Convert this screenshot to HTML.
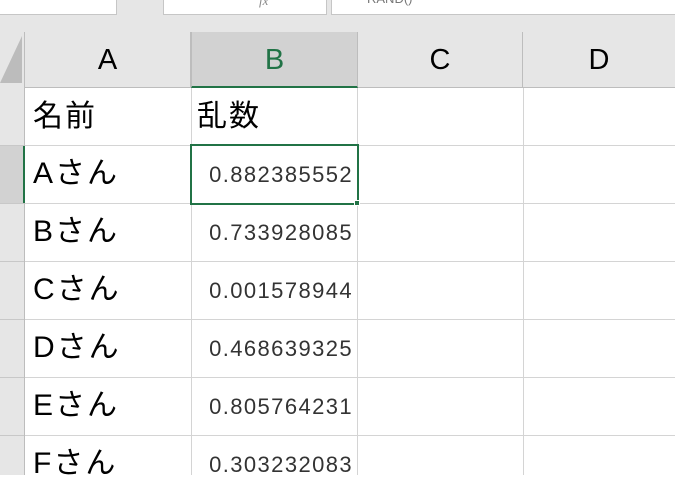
<!DOCTYPE html>
<html><head><meta charset="utf-8"><style>
*{margin:0;padding:0;box-sizing:border-box}
body{width:675px;height:475px;overflow:hidden;background:#fff;position:relative;font-family:"Liberation Sans","Noto Sans CJK JP",sans-serif}
.a{position:absolute}
.box{position:absolute;top:-2px;height:17px;background:#fff;border:1px solid #c6c6c6}
.hl{position:absolute;left:25px;width:650px;height:1px;background:#d4d4d4}
.vl{position:absolute;top:88px;height:387px;width:1px;background:#d4d4d4}
.ch{position:absolute;top:32px;height:56px;font-size:29px;line-height:56px;text-align:center;color:#000;border-right:1px solid #bdbdbd;border-bottom:1px solid #bdbdbd}
.n{position:absolute;left:33px;font-size:30px;color:#000;line-height:58px;height:58px;letter-spacing:2px}
.v{position:absolute;right:322px;font-size:22px;color:#333;line-height:58px;height:58px;letter-spacing:1.4px}
</style></head><body>
<div class="a" style="left:0;top:0;width:675px;height:88px;background:#e6e6e6"></div>
<div class="box" style="left:-2px;width:119px"></div>
<div class="box" style="left:163px;width:164px"><span style="position:absolute;left:95px;top:-6px;font-style:italic;font-size:13px;color:#888;font-family:'Liberation Serif',serif">fx</span></div>
<div class="box" style="left:331px;width:346px"><span style="position:absolute;left:35px;top:-8px;font-size:13px;color:#777">RAND()</span></div>
<svg class="a" style="left:0;top:36px" width="23" height="48"><polygon points="22,0 22,47 0,47" fill="#bcbcbc"/></svg>
<div class="a" style="left:24px;top:32px;width:1px;height:443px;background:#bdbdbd"></div>
<div class="ch" style="left:25px;width:166px">A</div>
<div class="ch" style="left:191px;width:167px;background:#d2d2d2;color:#217346;border-bottom:2px solid #217346;border-left:1px solid #bdbdbd">B</div>
<div class="ch" style="left:358px;width:165px">C</div>
<div class="ch" style="left:523px;width:152px;border-right:none">D</div>
<div class="a" style="left:0;top:88px;width:24px;height:387px;background:#e6e6e6"></div>
<div class="a" style="left:0;top:146px;width:24px;height:57px;background:#d2d2d2"></div>
<div class="a" style="left:23px;top:146px;width:2px;height:57px;background:#217346"></div>
<div class="hl" style="top:145px"></div><div class="hl" style="top:203px"></div><div class="hl" style="top:261px"></div><div class="hl" style="top:319px"></div><div class="hl" style="top:377px"></div><div class="hl" style="top:435px"></div>
<div class="a" style="left:0;top:145px;width:24px;height:1px;background:#c8c8c8"></div>
<div class="a" style="left:0;top:203px;width:24px;height:1px;background:#c8c8c8"></div>
<div class="a" style="left:0;top:261px;width:24px;height:1px;background:#c8c8c8"></div>
<div class="a" style="left:0;top:319px;width:24px;height:1px;background:#c8c8c8"></div>
<div class="a" style="left:0;top:377px;width:24px;height:1px;background:#c8c8c8"></div>
<div class="a" style="left:0;top:435px;width:24px;height:1px;background:#c8c8c8"></div>
<div class="vl" style="left:191px"></div><div class="vl" style="left:357px"></div><div class="vl" style="left:523px"></div>
<div class="n" style="top:88px">名前</div>
<div class="n" style="top:88px;left:197px">乱数</div>
<div class="n" style="top:145px">Aさん</div>
<div class="n" style="top:203px">Bさん</div>
<div class="n" style="top:261px">Cさん</div>
<div class="n" style="top:319px">Dさん</div>
<div class="n" style="top:377px">Eさん</div>
<div class="n" style="top:435px">Fさん</div>
<div class="v" style="top:146px">0.882385552</div>
<div class="v" style="top:204px">0.733928085</div>
<div class="v" style="top:262px">0.001578944</div>
<div class="v" style="top:320px">0.468639325</div>
<div class="v" style="top:378px">0.805764231</div>
<div class="v" style="top:436px">0.303232083</div>
<div class="a" style="left:190px;top:144px;width:169px;height:61px;border:2px solid #217346"></div>
<div class="a" style="left:354px;top:200px;width:6px;height:6px;background:#217346;border:1px solid #fff"></div>
</body></html>
